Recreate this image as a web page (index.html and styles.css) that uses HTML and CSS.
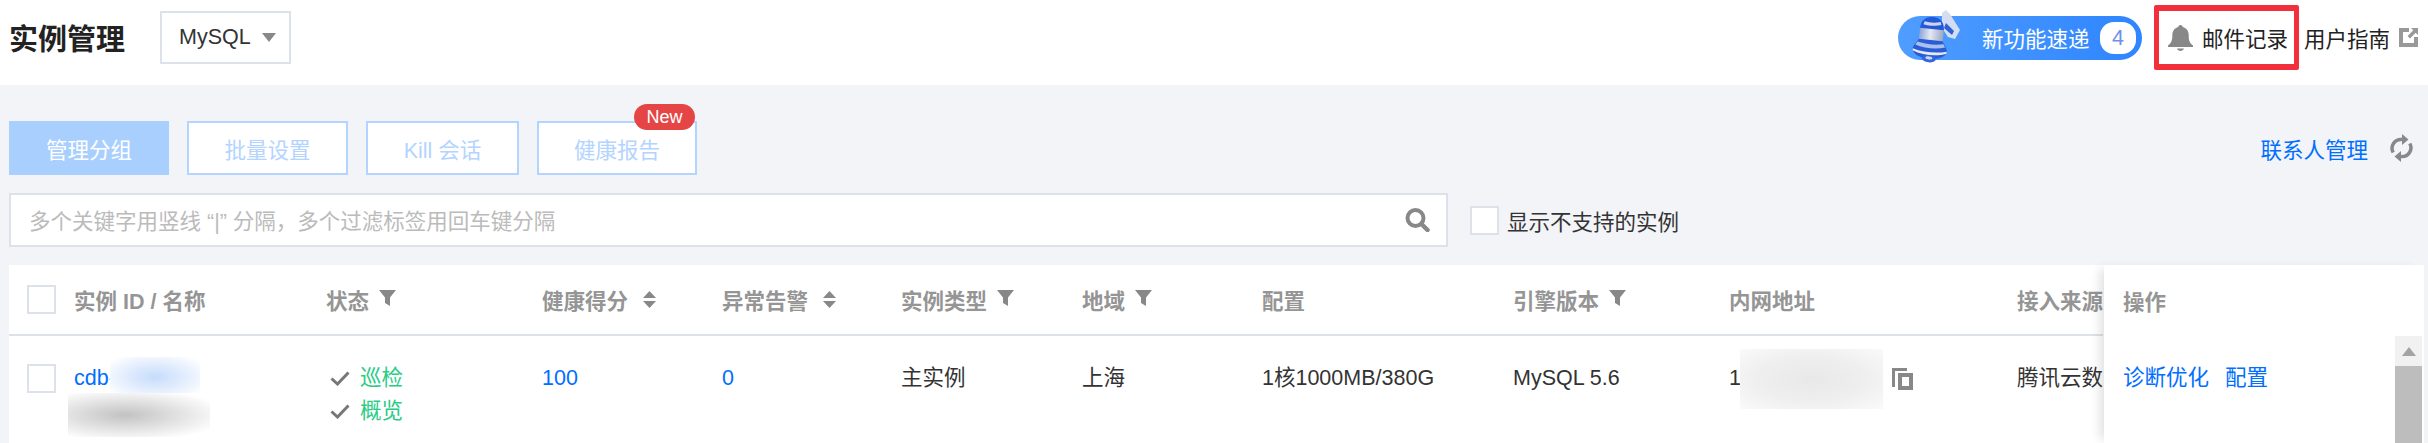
FILE: index.html
```html
<!DOCTYPE html>
<html lang="zh-CN">
<head>
  <meta charset="UTF-8" />
  <title>实例管理</title>
  <link rel="stylesheet" href="styles.css">
</head>
<body>
  <header class="top">
    <h1>实例管理</h1>
    <div class="select">MySQL <i class="caret"></i></div>
    <div class="top-right">
      <div class="pill">
        <svg class="pill-bell" viewBox="0 0 48 53">
          <defs>
            <linearGradient id="metal" x1="0" y1="0" x2="1" y2="0">
              <stop offset="0" stop-color="#8ea4d8" />
              <stop offset="0.45" stop-color="#e4e8f1" />
              <stop offset="1" stop-color="#9aa8c6" />
            </linearGradient>
          </defs>
          <path d="M30 3l4-3 4 4 10 16-5 9-7-2-6-9z" fill="#d5def0" />
          <path d="M34 13l8 8-2 4-8-7z" fill="#2f62d6" />
          <g transform="translate(-3 0) rotate(6 22 28)">
            <path d="M22 7c8 0 12 5 12 13H10C10 12 14 7 22 7z" fill="#2458d8" />
            <path d="M14 12c5 1 10 1 16-1l1 3c-6 2-12 2-18 1z" fill="#c9d6f4" />
            <path d="M10 19h24v12H10z" fill="url(#metal)" />
            <path d="M10 30h24c1 3 4 5 5 9 1 6-7 10-17 10S4 45 5 39c1-4 4-6 5-9z" fill="#2a5cd6" />
            <path d="M9 33c8 2 18 2 26 0l2 3c-9 3-21 3-30 0z" fill="#a9c0ee" />
            <path d="M5 40c10 3 24 3 34 0v2c-10 4-24 4-34 0z" fill="#e3e9f6" />
            <ellipse cx="22" cy="49" rx="7" ry="3.500" fill="#3568e0" />
            <ellipse cx="22" cy="48" rx="3.500" ry="1.500" fill="#cfd8ec" />
          </g>
        </svg>
        <span class="pill-text">新功能速递</span>
        <span class="pill-count">4</span>
      </div>
      <div class="mail-box">
        <svg class="bell" viewBox="0 0 25 26"><path d="M12.500 0c1.300 0 2.200.9 2.200 2.100 4 1 6 4.300 6 8.400 0 4.700.8 7.300 4.300 10v1.500H0V20.500c3.500-2.700 4.300-5.300 4.300-10 0-4.100 2-7.400 6-8.400C10.300.9 11.200 0 12.500 0zM9 23.500h7c-.4 1.500-1.900 2.500-3.500 2.500S9.400 25 9 23.500z" /></svg>
        <span>邮件记录</span>
      </div>
      <span class="guide">用户指南</span>
      <svg class="ext" viewBox="0 0 19 19"><path d="M0 0h10v4H4v11h11V9h4v10H0z" /><path d="M12 0h7v7l-2.300-2.300-5.700 5.700-2.400-2.400 5.700-5.700z" /></svg>
    </div>
  </header>

  <main class="content">
    <div class="toolbar">
      <button class="btn btn-primary">管理分组</button>
      <button class="btn btn-wide">批量设置</button>
      <button class="btn btn-kill">Kill 会话</button>
      <button class="btn btn-report">健康报告<span class="new">New</span></button>
      <a class="contact">联系人管理</a>
      <svg class="refresh" viewBox="0 0 23 28">
        <path class="refresh-arc" d="M3.200 18.500A8.800 8.800 0 0 1 12 5.500" />
        <path class="refresh-arc" d="M19.800 9.500A8.800 8.800 0 0 1 11 22.500" />
        <path d="M12 0l6.500 5.500L12 11zM11 17l-6.500 5.500L11 28z" />
      </svg>
    </div>

    <div class="filter">
      <div class="search">
        <span class="placeholder">多个关键字用竖线 “|” 分隔，多个过滤标签用回车键分隔</span>
        <svg class="search-icon" viewBox="0 0 25 24"><circle cx="10.500" cy="10" r="8" fill="none" stroke="#888" stroke-width="4" /><path d="M16.500 16L22.500 22" stroke="#888" stroke-width="4.500" stroke-linecap="round" /></svg>
      </div>
      <span class="check check-filter"></span>
      <span>显示不支持的实例</span>
    </div>

    <div class="table">
      <div class="table-main">
        <div class="row row-head">
          <div><span class="check"></span></div>
          <div>实例 ID / 名称</div>
          <div>状态<svg class="funnel" viewBox="0 0 17 16"><use href="#funnel-shape" /></svg></div>
          <div>健康得分<svg class="sort" viewBox="0 0 13 17"><path d="M6.500 0L13 7H0zM0 10h13l-6.500 7z" /></svg></div>
          <div>异常告警<svg class="sort" viewBox="0 0 13 17"><path d="M6.500 0L13 7H0zM0 10h13l-6.500 7z" /></svg></div>
          <div>实例类型<svg class="funnel" viewBox="0 0 17 16"><use href="#funnel-shape" /></svg></div>
          <div>地域<svg class="funnel" viewBox="0 0 17 16"><use href="#funnel-shape" /></svg></div>
          <div>配置</div>
          <div>引擎版本<svg class="funnel" viewBox="0 0 17 16"><use href="#funnel-shape" /></svg></div>
          <div>内网地址</div>
          <div>接入来源</div>
        </div>
        <div class="row row-body">
          <div><span class="check"></span></div>
          <div class="cell-name">
            <div class="name-id"><a>cdb-</a><span class="blur-blue"></span></div>
            <div class="blur-gray"></div>
          </div>
          <div class="cell-status">
            <div class="status-line"><svg class="tick" viewBox="0 0 20 15"><path d="M1.500 7.500L7.500 13 18.500 1.500" /></svg><span>巡检</span></div>
            <div class="status-line"><svg class="tick" viewBox="0 0 20 15"><path d="M1.500 7.500L7.500 13 18.500 1.500" /></svg><span>概览</span></div>
          </div>
          <div><a>100</a></div>
          <div><a>0</a></div>
          <div>主实例</div>
          <div>上海</div>
          <div>1核1000MB/380G</div>
          <div>MySQL 5.6</div>
          <div class="cell-ip">
            <span>1</span><span class="blur-ip"></span>
            <svg class="copy" viewBox="0 0 21 22"><path d="M0 0h15v3H3v16H0z" /><path fill-rule="evenodd" d="M6 5h15v17H6zm4 4v9h7V9z" /></svg>
          </div>
          <div>腾讯云数</div>
        </div>
      </div>
      <div class="table-fixed">
        <div class="fixed-head">操作</div>
        <div class="fixed-body">
          <div class="fixed-actions"><a>诊断优化</a><a>配置</a></div>
          <div class="scrollbar">
            <div class="scroll-up"><i></i></div>
            <div class="scroll-thumb"></div>
          </div>
        </div>
      </div>
    </div>
  </main>

  <svg class="defs" width="0" height="0">
    <path id="funnel-shape" d="M0 0h17l-6 7.500V16l-5-3V7.500z" />
  </svg>
</body>
</html>
```

FILE: styles.css
```css
html, body {
  margin: 0;
  height: 443px;
  overflow: hidden;
}
body {
  font-family: "Liberation Sans", "Noto Sans CJK SC", sans-serif;
  font-size: 21.500px;
  color: #333;
  background-color: #f2f4f8;
}
a {
  color: #006eff;
}
.defs {
  display: block;
}

/* top bar */
.top {
  display: flex;
  align-items: center;
  height: 85px;
  padding-left: 9px;
  background-color: #fff;
}
.top h1 {
  margin: 0 0 12px;
  width: 151px;
  font-size: 29px;
  color: #222;
}
.select {
  display: flex;
  align-items: center;
  box-sizing: border-box;
  width: 131px;
  height: 53px;
  margin-bottom: 10px;
  padding-left: 17px;
  border: 2px solid #dde2ea;
  gap: 11px;
  color: #333;
}
.caret {
  width: 0;
  height: 0;
  border-left: 7px solid transparent;
  border-right: 7px solid transparent;
  border-top: 9px solid #888;
}
.top-right {
  display: flex;
  align-items: center;
  margin-left: auto;
  padding-right: 10px;
  padding-bottom: 10px;
  color: #222;
}
.pill {
  display: flex;
  align-items: center;
  box-sizing: border-box;
  width: 244px;
  height: 44px;
  padding-left: 14px;
  border-radius: 22px;
  background: linear-gradient(90deg, #4f9dff, #2f85ff);
  color: #fff;
}
.pill-bell {
  width: 48px;
  height: 53px;
  margin: -3px 22px 0 0;
  flex: none;
}
.pill-text {
  width: 118px;
}
.pill-count {
  width: 36px;
  height: 32px;
  line-height: 32px;
  text-align: center;
  border-radius: 14px;
  background-color: #fff;
  color: #6f8fe8;
}
.mail-box {
  display: flex;
  align-items: center;
  box-sizing: border-box;
  width: 145px;
  height: 65px;
  margin-left: 12px;
  padding-left: 9px;
  border: 5px solid #f1303c;
  border-width: 6px 5px;
  border-radius: 2px;
  gap: 9px;
}
.bell {
  width: 25px;
  height: 26px;
  fill: #888;
}
.guide {
  margin-left: 5px;
}
.ext {
  width: 19px;
  height: 19px;
  margin-left: 9px;
  fill: #999;
}

/* buttons */
.content {
  padding: 36px 4px 0 9px;
}
.toolbar {
  display: flex;
  align-items: center;
  gap: 18px;
}
.btn {
  position: relative;
  box-sizing: border-box;
  width: 161px;
  height: 54px;
  padding: 0;
  border: 2px solid #b3d4ff;
  background-color: #fff;
  color: #b3d4ff;
  font: inherit;
}
.btn-primary {
  width: 160px;
  background-color: #a9cfff;
  border-color: #a9cfff;
  color: #fff;
}
.btn-kill {
  width: 153px;
}
.btn-report {
  width: 160px;
}
.new {
  position: absolute;
  top: -19px;
  right: 0;
  width: 61px;
  height: 26px;
  line-height: 26px;
  border-radius: 13px;
  background-color: #e54545;
  color: #fff;
  font-size: 18px;
}
.contact {
  margin-left: auto;
}
.refresh {
  width: 23px;
  height: 28px;
  margin: 0 11px 0 4px;
  fill: #888;
}
.refresh-arc {
  fill: none;
  stroke: #888;
  stroke-width: 3.500;
}

/* search */
.filter {
  display: flex;
  align-items: center;
  margin-top: 18px;
}
.search {
  display: flex;
  align-items: center;
  justify-content: space-between;
  box-sizing: border-box;
  width: 1439px;
  height: 54px;
  padding: 0 16px 0 18px;
  border: 2px solid #dde2ea;
  background-color: #fff;
  color: #bbb;
}
.placeholder {
  margin-top: -2px;
}
.search-icon {
  width: 25px;
  height: 24px;
}
.check {
  display: block;
  box-sizing: border-box;
  width: 29px;
  height: 29px;
  border: 2px solid #dde2ea;
  background-color: #fff;
}
.check-filter {
  margin: 0 8px 0 22px;
}

/* table */
.table {
  display: flex;
  margin-top: 18px;
  background-color: #fff;
  height: 178px;
}
.table-main {
  width: 2095px;
  overflow: hidden;
}
.row {
  display: grid;
  grid-template-columns: 65px 252px 216px 180px 179px 181px 180px 251px 216px 288px 86px;
  width: 2094px;
}
.row-head {
  align-items: center;
  height: 71px;
  box-sizing: border-box;
  border-bottom: 2px solid #dde2ea;
  color: #959595;
  font-weight: 700;
}
.row-head > div {
  display: flex;
  align-items: center;
  white-space: nowrap;
}
.row-head > div:first-child,
.row-body > div:first-child {
  padding-left: 18px;
}
.row-body {
  padding-top: 28px;
  line-height: 29px;
}
.row-body > div {
  white-space: nowrap;
}
.funnel {
  width: 17px;
  height: 16px;
  margin: 0 0 4px 10px;
  fill: #888;
}
.sort {
  width: 13px;
  height: 17px;
  margin-left: 15px;
  fill: #888;
}
.name-id {
  display: flex;
  height: 29px;
}
.blur-blue {
  display: block;
  width: 90px;
  height: 36px;
  margin: -7px 0 0 -6px;
  flex: none;
  background: radial-gradient(ellipse at 50% 55%, #c6dcfb 0%, #e4eefd 50%, #fff 92%);
}
.blur-gray {
  width: 142px;
  height: 44px;
  margin-left: -6px;
  background: radial-gradient(ellipse at 40% 50%, #c2c2c2 0%, #e2e2e2 45%, #fff 85%);
}
.status-line {
  display: flex;
  align-items: center;
  height: 33px;
  margin-top: -2px;
  color: #29cc85;
}
.status-line + .status-line {
  margin-top: 0;
}
.tick {
  width: 20px;
  height: 15px;
  margin: 0 10px 0 4px;
  fill: none;
  stroke: #777;
  stroke-width: 3;
}
.cell-ip {
  display: flex;
  align-items: center;
  height: 29px;
}
.blur-ip {
  width: 143px;
  height: 60px;
  margin: 0 9px 0 -1px;
  flex: none;
  background: radial-gradient(ellipse at 50% 50%, #e8e8e8 0%, #efefef 55%, #fafafa 100%);
}
.copy {
  width: 21px;
  height: 22px;
  fill: #888;
}

/* fixed action column */
.table-fixed {
  flex: none;
  width: 320px;
  box-shadow: -8px 0 10px -4px rgba(0, 0, 0, 0.12);
  background-color: #fff;
}
.fixed-head {
  display: flex;
  align-items: center;
  height: 71px;
  padding-left: 19px;
  color: #959595;
  font-weight: 700;
}
.fixed-body {
  display: flex;
  justify-content: space-between;
}
.fixed-actions {
  display: flex;
  gap: 16px;
  height: 0;
  padding: 28px 0 0 19px;
  line-height: 29px;
}
.scrollbar {
  width: 27px;
  height: 107px;
  margin-right: 2px;
  background-color: #f1f1f1;
}
.scroll-up {
  display: flex;
  align-items: center;
  justify-content: center;
  height: 30px;
}
.scroll-up i {
  border-left: 7px solid transparent;
  border-right: 7px solid transparent;
  border-bottom: 9px solid #a3a3a3;
}
.scroll-thumb {
  height: 77px;
  background-color: #bdbdbd;
}
```
